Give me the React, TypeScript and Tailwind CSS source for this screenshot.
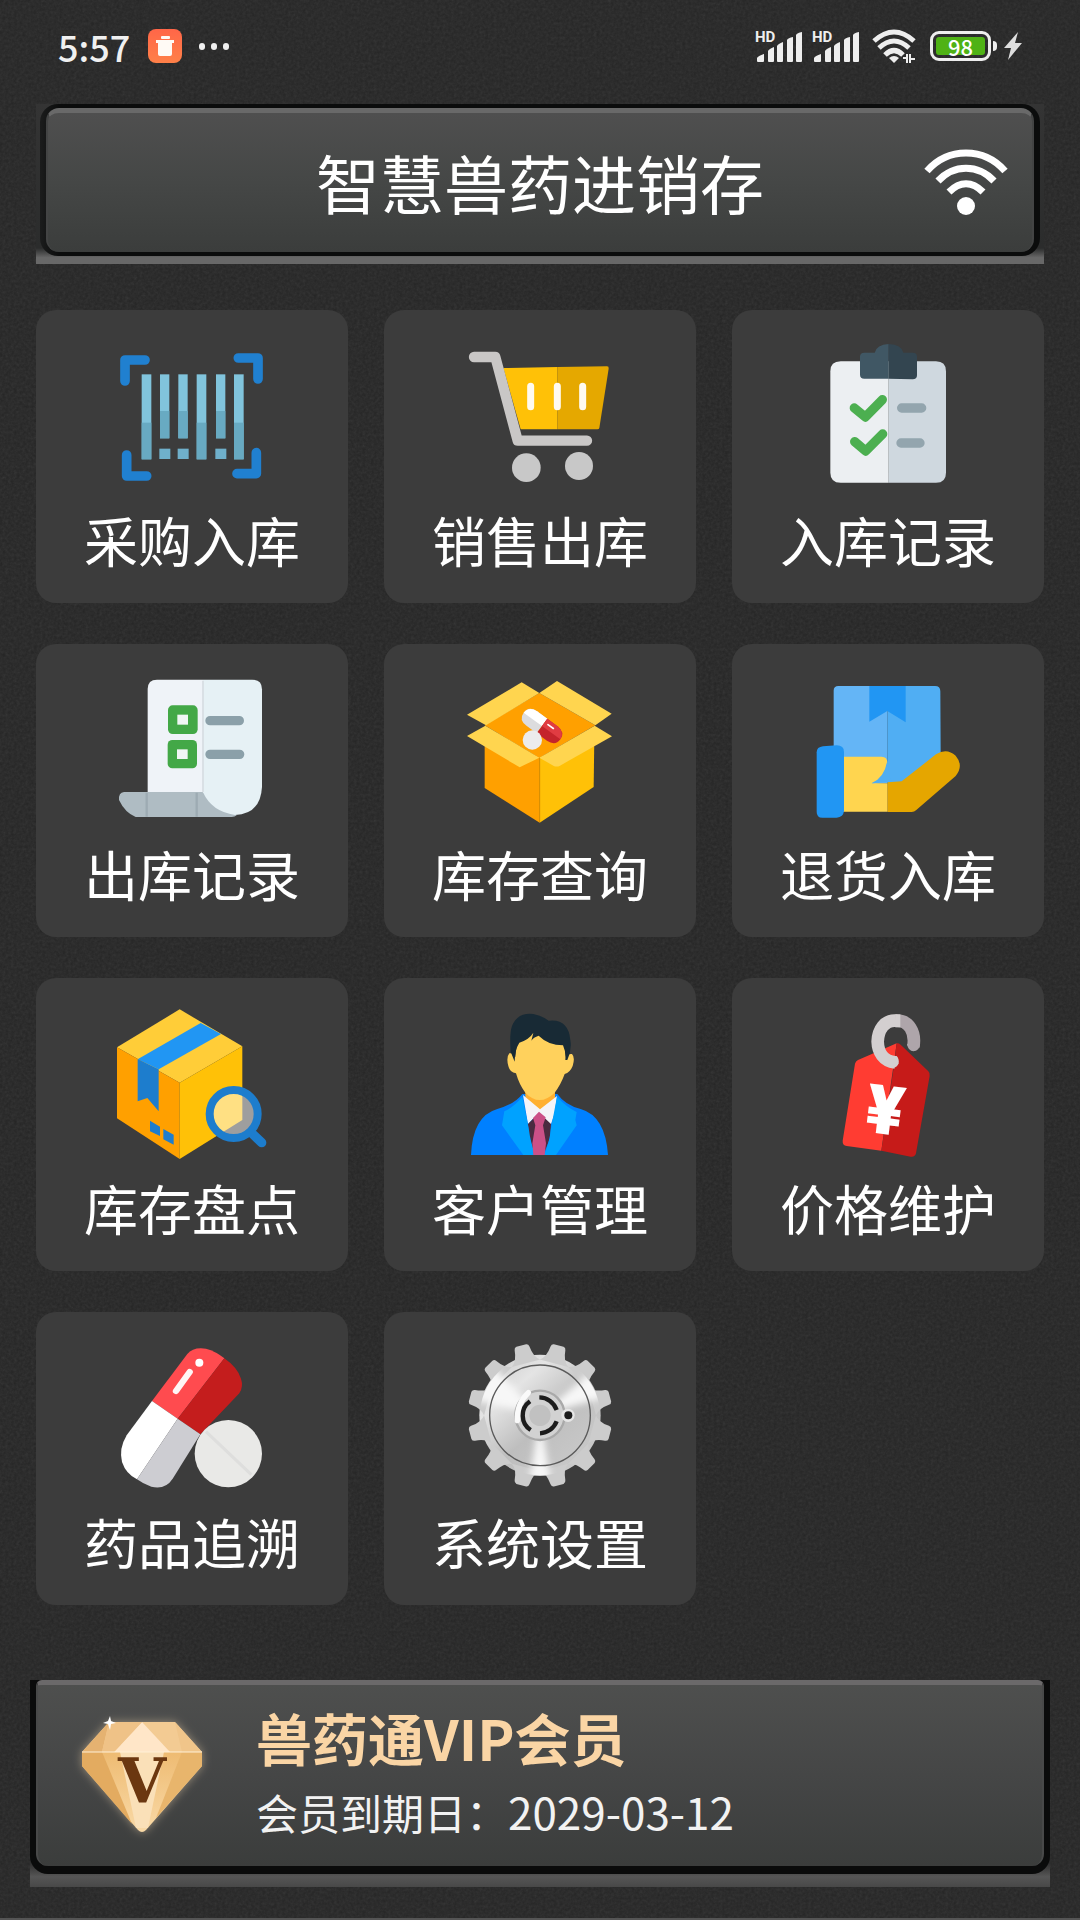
import type { ReactNode } from "react";

function Art({ viewBox, children }: { viewBox: string; children: ReactNode }) {
  return (
    <svg viewBox={viewBox} className="h-40 w-40" fill="none" aria-hidden="true">
      {children}
    </svg>
  );
}

const LONG_BARS = [365, 530, 642];
const SHORT_BARS = [420, 475, 588];

function BarcodeArt() {
  return (
    <Art viewBox="276 120 480 480">
      <g stroke="#2080d0" strokeWidth="29" strokeLinecap="round" strokeLinejoin="round">
        <path d="M315 243V180H375" />
        <path d="M655 174H714V237" />
        <path d="M320 465V528H380" />
        <path d="M651 521H709V458" />
      </g>
      {LONG_BARS.map((x) => (
        <g key={x}>
          <rect x={x} y="223" width="29" height="255" fill="#81c4dc" />
          <rect x={x} y="368" width="29" height="110" fill="#68aac2" />
        </g>
      ))}
      {SHORT_BARS.map((x) => (
        <g key={x}>
          <rect x={x} y="223" width="28" height="192" fill="#81c4dc" />
          <rect x={x} y="333" width="28" height="82" fill="#68aac2" />
          <rect x={x - 2} y="446" width="33" height="31" fill="#6fb0cb" />
        </g>
      ))}
    </Art>
  );
}

function CartArt() {
  return (
    <Art viewBox="270 120 480 480">
      <path d="M400 204L562 201V388H452Z" fill="#ffc107" />
      <path d="M562 201L711 199Q717 199 716 206L688 384Q687 388 682 388H562Z" fill="#e5a800" />
      <path d="M312 171H376L443 422H651" stroke="#c9c7c6" strokeWidth="31" strokeLinecap="round" strokeLinejoin="round" />
      <path d="M482 259V320M562 259V320M638 259V320" stroke="#fffaf0" strokeWidth="21" strokeLinecap="round" />
      <circle cx="469" cy="503" r="43" fill="#c8c8c8" />
      <circle cx="627" cy="498" r="42" fill="#c8c8c8" />
    </Art>
  );
}

function ClipboardArt() {
  return (
    <Art viewBox="264 120 480 480">
      <path d="M506 184H362Q331 184 331 214V518Q331 548 362 548H506Z" fill="#eceff2" />
      <path d="M506 184H648Q678 184 678 214V518Q678 548 648 548H506Z" fill="#cfd8df" />
      <path d="M506 132Q470 134 464 158H433Q420 158 420 170V224Q420 236 433 236H506Z" fill="#405764" />
      <path d="M506 132Q545 134 550 158H578Q591 158 591 170V226Q591 238 578 238L506 236Z" fill="#334550" />
      <g stroke="#4caf50" strokeWidth="28" strokeLinecap="round" strokeLinejoin="round">
        <path d="M403 324L436 351L487 299" />
        <path d="M404 425L437 453L488 402" />
      </g>
      <path d="M545 324H605M543 429H600" stroke="#93a5ae" strokeWidth="28" strokeLinecap="round" />
    </Art>
  );
}

function ReceiptArt() {
  return (
    <Art viewBox="276 102 480 480">
      <path d="M383 460V147Q383 119 411 119H549V460Z" fill="#eff3f8" />
      <path d="M312 456H556L650 526Q645 531 635 531H347Q315 518 297 480Q295 458 312 456Z" fill="#afbcc3" />
      <path d="M380 458V530M530 458V530" stroke="#9dabb3" strokeWidth="7" />
      <path d="M549 119H697Q726 119 726 148V440Q722 522 645 525Q575 515 549 457Z" fill="#e6f1f5" />
      <path d="M549 122V457" stroke="#d6dde1" strokeWidth="5" />
      <rect x="444" y="196" width="89" height="86" rx="14" fill="#43a847" />
      <rect x="443" y="300" width="88" height="85" rx="14" fill="#43a847" />
      <rect x="472" y="224" width="32" height="30" fill="#f0f6f4" />
      <rect x="471" y="328" width="32" height="29" fill="#f0f6f4" />
      <path d="M570 242H658M570 343H659" stroke="#8ba0a9" strokeWidth="28" strokeLinecap="round" />
    </Art>
  );
}

function OpenBoxArt() {
  return (
    <Art viewBox="270 102 480 480">
      <path d="M508 159L676 256L508 354L344 256Z" fill="#ffa000" />
      <path d="M344 290L509 352V548L344 444Z" fill="#ffa000" />
      <path d="M509 352L673 290L671 441L509 548Z" fill="#ffc107" />
      <path d="M509 352V546" stroke="#d98f00" strokeWidth="3" />
      <g fill="#ffd54f">
        <path d="M455 127L508 159L348 256L291 224Z" />
        <path d="M561 123L725 221L676 256L508 159Z" />
        <path d="M346 257L508 353L449 382L291 288Z" />
        <path d="M674 257L726 289L570 377Q560 382 550 377L508 353Z" />
      </g>
      <g transform="translate(516 258) rotate(36)">
        <path d="M0-27H-38Q-68-26-68 0T-38 27H0Z" fill="#dcdcde" />
        <path d="M0-27H-38Q-66-26-68 0H0Z" fill="#ffffff" />
        <path d="M0-27H38Q68-26 68 0T38 27H0Z" fill="#c4242b" />
        <path d="M0-27H38Q66-26 68 0H0Z" fill="#e03c42" />
        <path d="M12-14H32" stroke="#fff" strokeWidth="5" strokeLinecap="round" />
      </g>
      <circle cx="487" cy="300" r="29" fill="#ececec" />
    </Art>
  );
}

function ReturnArt() {
  return (
    <Art viewBox="264 102 480 480">
      <path d="M341 440V152Q341 138 355 138H502V430Z" fill="#64b5f6" />
      <path d="M502 138H645Q661 138 661 154L662 340L550 430H502Z" fill="#50aef3" />
      <path d="M448 138H557V247L502 213L448 245Z" fill="#2196f3" />
      <path d="M365 350H485Q502 350 502 368Q495 412 455 430H503V515H365Z" fill="#ffd54f" />
      <path d="M455 430Q495 412 502 360L512 426Z" fill="#50aef3" />
      <path d="M503 427L545 424L648 343Q680 322 707 347Q732 377 707 408L588 511Q583 516 575 516H503Z" fill="#e5a600" />
      <path d="M309 319L350 316Q372 316 372 336V513Q370 531 350 533H307Q290 533 290 515V337Q290 321 309 319Z" fill="#2196f3" />
    </Art>
  );
}

function StocktakeArt() {
  return (
    <Art viewBox="276 114 480 480">
      <path d="M479 118L667 229L479 338L291 232Z" fill="#ffcd38" />
      <path d="M291 232L479 338V567L291 445Z" fill="#ffa000" />
      <path d="M667 229L479 338V567L667 450Z" fill="#ffc107" />
      <path d="M542 159L603 192L416 298L353 268Z" fill="#2196f3" />
      <path d="M353 268L416 298V424L382 384L353 394Z" fill="#1d7dcd" />
      <path d="M390 452L420 470V498L390 484ZM430 477L461 494V524L430 508Z" fill="#1d7dcd" />
      <path d="M698 492L725 518" stroke="#1d7dcd" strokeWidth="28" strokeLinecap="round" />
      <circle cx="641" cy="432" r="72" fill="#ffffff" fillOpacity=".5" stroke="#1d7dcd" strokeWidth="24" />
    </Art>
  );
}

function PersonArt() {
  return (
    <Art viewBox="0 114 480 480">
      <path d="M33 555Q38 438 112 417Q165 402 187 372H292Q315 405 362 417Q436 438 444 555Z" fill="#0080ff" />
      <path d="M196 345H285V385L240 425L196 385Z" fill="#ffb031" />
      <path d="M189 375L240 418L291 378L284 430L272 465L237 428L204 462Z" fill="#f4f4f8" />
      <path d="M204 462L237 428L273 462L270 505L250 555H225L208 515Z" fill="#4a2b40" />
      <path d="M187 380Q160 412 133 424L126 466L190 555H226Q212 520 206 475Z" fill="#00a2ff" />
      <path d="M291 380Q320 412 350 426L346 450L350 466L288 555H252Q268 520 273 475Z" fill="#00a2ff" />
      <path d="M237 425L257 442L249 466L258 520L254 555H220L217 520L226 466L219 444Z" fill="#cb5087" />
      <path d="M166 262Q160 248 148 250Q138 262 145 288Q150 308 168 310Q178 345 196 368Q238 412 284 368Q302 345 314 312Q330 308 338 288Q346 262 336 252Q324 250 318 262L312 200Q240 140 172 200Z" fill="#ffd15c" />
      <path d="M164 275L152 245Q148 190 156 168Q172 127 220 132Q252 140 266 152Q325 145 331 210Q336 240 322 270L316 270Q318 245 309 226Q265 226 236 197Q220 202 214 212L220 188Q208 208 178 218Q164 240 164 275Z" fill="#182a35" />
    </Art>
  );
}

function PriceTagArt() {
  return (
    <Art viewBox="264 114 480 480">
      <path d="M530 220L414 270Q407 273 405 281L368 512Q367 526 380 528L484 542Z" fill="#ff3c32" />
      <path d="M530 220Q536 219 542 224L625 304Q631 310 629 318L588 550Q585 562 572 560L484 542L520 300Z" fill="#c61b19" />
      <path d="M530 152C494 148 474 180 473 215C474 246 490 274 525 277" stroke="#d3cfd0" strokeWidth="38" />
      <path d="M518 258H530Q538 266 536 280Q532 292 518 294Z" fill="#d3cfd0" />
      <path d="M528 152C566 150 588 186 580 230" stroke="#aea5aa" strokeWidth="38" />
      <path d="M561 222H600Q598 244 580 244Q565 244 561 222Z" fill="#aea5aa" />
      <path d="M526 133H541V172H526Z" fill="#d3cfd0" />
      <text
        x="496"
        y="492"
        textAnchor="middle"
        fontSize="200"
        fontWeight="900"
        fill="#ffffff"
        transform="rotate(7 496 420)"
        className="font-['Inter',sans-serif]"
      >
        ¥
      </text>
    </Art>
  );
}

function PillArt() {
  return (
    <Art viewBox="276 126 480 480">
      <path d="M396 303L502 162Q520 140 558 146Q588 154 613 175L473 356Z" fill="#ff4b4f" />
      <path d="M473 356L613 175Q652 202 663 236Q671 260 658 280L541 403Z" fill="#c41d1d" />
      <path d="M396 303L320 406Q296 446 306 486Q318 522 351 538L473 356Z" fill="#ffffff" />
      <path d="M473 356L541 403L458 536Q436 570 394 560Q368 551 351 538Z" fill="#cdcdd2" />
      <circle cx="538" cy="188" r="12" fill="#fff" />
      <path d="M509 216L468 273" stroke="#fff5f5" strokeWidth="19" strokeLinecap="round" />
      <circle cx="625" cy="461" r="101" fill="#e9e9e7" />
      <path d="M558 395L694 524" stroke="#dededd" strokeWidth="9" />
    </Art>
  );
}

const TEETH = [15, 45, 75, 105, 135, 165, 195, 225, 255, 285, 315, 345];

function GearArt() {
  return (
    <Art viewBox="0 126 480 480">
      <defs>
        <linearGradient id="steel" x1="60" y1="140" x2="420" y2="550" gradientUnits="userSpaceOnUse">
          <stop offset="0" stopColor="#c2c2c2" />
          <stop offset=".3" stopColor="#e4e4e4" />
          <stop offset=".55" stopColor="#bebebe" />
          <stop offset="1" stopColor="#cfcfcf" />
        </linearGradient>
        <filter id="soften" x="-20%" y="-20%" width="140%" height="140%">
          <feGaussianBlur stdDeviation="11" />
        </filter>
        <clipPath id="disc">
          <circle cx="240" cy="346" r="180" />
        </clipPath>
      </defs>
      <circle cx="240" cy="346" r="182" fill="url(#steel)" />
      {TEETH.map((deg) => (
        <path
          key={deg}
          transform={`rotate(${deg} 240 346)`}
          d="M196 184Q214 172 217 138Q218 130 225 129H255Q262 130 263 138Q266 172 284 184Z"
          fill="#cccccc"
        />
      ))}
      <g clipPath="url(#disc)">
        <g filter="url(#soften)" fill="#f7f7f7">
          <path d="M240 346L40 300L90 190Z" />
          <path d="M240 346L400 210L440 290Z" />
          <path d="M240 346L205 560H275Z" />
        </g>
      </g>
      <circle cx="240" cy="346" r="151" stroke="#5a5a5a" strokeWidth="4" />
      <circle cx="240" cy="346" r="74" fill="#d2d2d2" stroke="#a9a9a9" strokeWidth="7" />
      <path d="M205 278Q170 310 172 362" stroke="#fafafa" strokeWidth="16" strokeLinecap="round" />
      <g stroke="#1c1c1c" strokeWidth="13">
        <path d="M210 304A52 52 0 0 0 212 390" />
        <path d="M238 292A56 56 0 0 1 290 330" />
        <path d="M290 364A56 56 0 0 1 240 400" />
      </g>
      <circle cx="240" cy="346" r="32" fill="#c1c1c1" />
      <circle cx="324" cy="346" r="20" fill="#e6e6e6" />
      <circle cx="325" cy="346" r="12" fill="#1c1c1c" />
    </Art>
  );
}

function DiamondArt() {
  return (
    <svg viewBox="0 0 140 140" className="h-[140px] w-[140px]" fill="none" aria-hidden="true">
      <defs>
        <filter id="glow" x="-20%" y="-20%" width="140%" height="140%">
          <feGaussianBlur stdDeviation="5" />
        </filter>
        <linearGradient id="gold" x1="70" y1="46" x2="70" y2="125" gradientUnits="userSpaceOnUse">
          <stop offset="0" stopColor="#eebb72" />
          <stop offset="1" stopColor="#f9d9a6" />
        </linearGradient>
      </defs>
      <path d="M37 16H103L130 46V60L74 124Q70 128 66 124L10 60V46Z" fill="#ffe2b8" fillOpacity=".45" filter="url(#glow)" />
      <path d="M37 16H103L130 46H10Z" fill="#f3cb93" />
      <path d="M70 16L98 46H42Z" fill="#ffe6c8" />
      <path d="M37 16L30 46H10Z" fill="#e5b271" />
      <path d="M103 16L110 46H130Z" fill="#f0c58a" />
      <path d="M37 16H70L42 46H30Z" fill="#efc287" />
      <path d="M10 46H130V60L74 124Q70 128 66 124L10 60Z" fill="url(#gold)" />
      <path d="M10 46H30L60 118L10 60Z" fill="#e3ab60" />
      <path d="M130 46H110L84 112L130 60Z" fill="#e8b56c" />
      <path d="M48 46H92L76 122H64Z" fill="#fae0b8" />
      <path d="M10 46H130" stroke="#fff0d6" strokeWidth="1" />
      <path d="M38 10L39 15L44 17L39 18L38 24L36 18L31 17L36 15Z" fill="#fff" />
      <text
        x="70"
        y="96"
        textAnchor="middle"
        fontSize="62"
        fontWeight="700"
        fill="#6b3710"
        className="font-['DejaVu_Serif',serif]"
      >
        V
      </text>
    </svg>
  );
}

function SignalBars() {
  return (
    <svg viewBox="0 0 50 34" className="h-[34px] w-[50px]" fill="#eeeeee" aria-hidden="true">
      <text x="0" y="13" fontSize="15" fontWeight="700" className="font-['Roboto',sans-serif]">HD</text>
      <path d="M2 32V29Q3 27 9 25V32Q9 33 8 33H3Q2 33 2 32Z" />
      <path d="M13 32V22Q14 20 19 18V32Q19 33 18 33H14Q13 33 13 32Z" />
      <path d="M22 32V17Q23 15 28 13V32Q28 33 27 33H23Q22 33 22 32Z" />
      <path d="M32 32V11Q33 9 38 8V32Q38 33 37 33H33Q32 33 32 32Z" />
      <path d="M41 32V6Q42 4 47 3V32Q47 33 46 33H42Q41 33 41 32Z" />
    </svg>
  );
}

function StatusBar() {
  return (
    <div className="flex h-[92px] items-center justify-between pr-[58px] pl-[58px]">
      <div className="flex items-center">
        <span className="font-['Noto_Sans_CJK_SC',sans-serif] text-[36px] leading-none font-medium text-[#f0f0f0]">5:57</span>
        <span className="ml-[18px] flex h-[34px] w-[34px] items-center justify-center rounded-lg bg-linear-to-b from-[#ff6648] to-[#ff8048]">
          <svg viewBox="0 0 20 20" className="h-5 w-5" fill="#fffaf5" aria-hidden="true">
            <rect x="6" y="0" width="9" height="3" rx="1" />
            <path d="M1 4H19V7H17V18Q17 20 15 20H5Q3 20 3 18V7H1Z" />
          </svg>
        </span>
        <span className="ml-[17px] flex gap-[6px]">
          <i className="h-[7px] w-[6px] rounded-full bg-[#f0f0f0]" />
          <i className="h-[7px] w-[6px] rounded-full bg-[#f0f0f0]" />
          <i className="h-[7px] w-[6px] rounded-full bg-[#f0f0f0]" />
        </span>
      </div>
      <div className="flex items-center">
        <SignalBars />
        <span className="w-[7px]" />
        <SignalBars />
        <svg viewBox="0 0 44 34" className="ml-[10px] h-[34px] w-[44px]" fill="none" stroke="#eeeeee" aria-hidden="true">
          <path d="M2 12Q22-6 42 12" strokeWidth="5" />
          <path d="M7 19Q22 5 37 19" strokeWidth="5" />
          <path d="M13 26Q22 17 31 26" strokeWidth="5" />
          <path d="M17 29Q22 25 27 29L22 34Z" fill="#eeeeee" stroke="none" />
          <path d="M31 29H35V34M35 25V34M38 34V25M38 30H43" strokeWidth="2" />
        </svg>
        <span className="ml-[14px] flex h-[30px] w-[61px] rounded-[9px] border-[3px] border-[#eeeeee] p-[3px]">
          <span className="flex flex-1 items-center justify-center rounded-[3px] bg-[#4fb215] font-['Noto_Sans_CJK_SC',sans-serif] text-[22px] leading-none font-medium text-white">
            98
          </span>
        </span>
        <span className="ml-[2px] h-[10px] w-[4px] rounded-r-sm bg-[#eeeeee]" />
        <svg viewBox="0 0 18 28" className="ml-[7px] h-7 w-[18px]" fill="#dddddd" aria-hidden="true">
          <path d="M14 0L0 16H7L4 28L18 11H11Z" />
        </svg>
      </div>
    </div>
  );
}

function Header() {
  return (
    <header className="bg-linear-to-b from-[#343434] from-0% via-[#2b2c2c] via-90% to-[#686868] to-96% px-1 pb-2">
      <div className="rounded-[18px] bg-linear-to-r from-[#1b1c1c] from-0% via-[#0b0c0c] via-2% to-[#0b0c0c] to-100% px-[6px] py-1">
        <div className="grid h-36 grid-cols-[1fr_auto_1fr] items-center rounded-[13px] border-x-2 border-t-[5px] border-x-[#434444] border-t-[#696969] bg-linear-to-b from-[#4f4f4f] via-[#454746] to-[#3b3d3c] pr-6 pb-1 pl-6">
          <span />
          <h1 className="text-[64px] leading-none text-white">智慧兽药进销存</h1>
          <button type="button" aria-label="网络状态" className="justify-self-end">
            <svg viewBox="0 0 84 68" className="h-[68px] w-[84px]" fill="none" stroke="#ffffff" strokeWidth="7" aria-hidden="true">
              <path d="M3 24C24 0 60 0 81 24" />
              <path d="M14 34C30 17 54 17 70 34" />
              <path d="M25 45C36 34 48 34 59 45" />
              <circle cx="42" cy="59" r="9" fill="#ffffff" stroke="none" />
            </svg>
          </button>
        </div>
      </div>
    </header>
  );
}

const MENU = [
  { label: "采购入库", art: <BarcodeArt /> },
  { label: "销售出库", art: <CartArt /> },
  { label: "入库记录", art: <ClipboardArt /> },
  { label: "出库记录", art: <ReceiptArt /> },
  { label: "库存查询", art: <OpenBoxArt /> },
  { label: "退货入库", art: <ReturnArt /> },
  { label: "库存盘点", art: <StocktakeArt /> },
  { label: "客户管理", art: <PersonArt /> },
  { label: "价格维护", art: <PriceTagArt /> },
  { label: "药品追溯", art: <PillArt /> },
  { label: "系统设置", art: <GearArt /> },
];

function VipCard() {
  return (
    <section className="mx-[30px] bg-linear-to-b from-[#2c2c2c] from-88% via-[#565656] via-95% to-[#484848] to-100% pb-[13px]">
      <div className="rounded-b-[18px] bg-[#0a0b0b] px-[6px] pb-[8px]">
        <button
          type="button"
          className="flex h-[186px] w-full items-center rounded-t-md rounded-b-xl border-x-2 border-t-[5px] border-x-[#484949] border-t-[#6b696a] bg-linear-to-b from-[#4e4f4e] via-[#454646] to-[#3b3d3c] pl-[34px] text-left"
        >
          <DiamondArt />
          <span className="ml-[44px] flex flex-col">
            <span className="text-[56px] leading-[72px] font-bold text-[#fad5a5]">兽药通VIP会员</span>
            <span className="text-[42px] leading-[76px] text-[#f2f2f2]">
              会员到期日：<span className="text-[44px]">2029-03-12</span>
            </span>
          </span>
        </button>
      </div>
    </section>
  );
}

export default function App() {
  return (
    <div className="relative min-h-screen border-b-2 border-[#555] bg-[#252525] font-['Noto_Sans_CJK_SC',sans-serif]">
      {/* leather grain behind everything */}
      <svg className="absolute inset-0 h-full w-full opacity-10" aria-hidden="true">
        <filter id="grain">
          <feTurbulence type="fractalNoise" baseFrequency="0.35" numOctaves="3" />
          <feColorMatrix type="saturate" values="0" />
        </filter>
        <rect width="100%" height="100%" filter="url(#grain)" />
      </svg>

      <div className="relative pb-7">
        <StatusBar />
        <main className="px-9 pt-3">
          <Header />
          <nav className="mt-[46px] grid grid-cols-3 gap-x-9 gap-y-[41px]">
            {MENU.map((item) => (
              <button
                key={item.label}
                type="button"
                className="flex flex-col items-center rounded-[20px] bg-[#3c3c3c] pt-[30px] pb-[23px]"
              >
                {item.art}
                <span className="text-[54px] leading-[80px] text-white">{item.label}</span>
              </button>
            ))}
          </nav>
        </main>
        <div className="mt-[75px]">
          <VipCard />
        </div>
      </div>
    </div>
  );
}
